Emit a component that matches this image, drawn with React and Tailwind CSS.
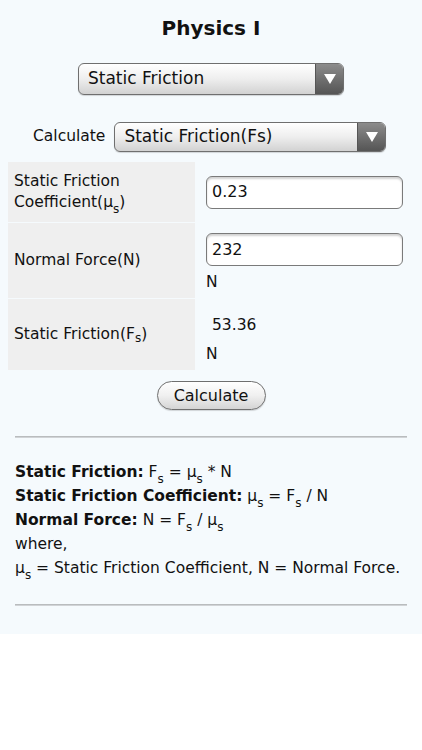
import React from "react";

const Sub = ({ children }) => (
  <sub className="text-[12px] align-[-3px] leading-none">{children}</sub>
);

const SelectBox = ({ label, className }) => (
  <div
    className={`flex items-stretch rounded-[6px] border border-[#6f6f6f] overflow-hidden bg-gradient-to-b from-[#ffffff] via-[#eeeeee] to-[#d2d2d2] shadow-[0_1px_1px_rgba(0,0,0,0.15)] ${className}`}
  >
    <div className="flex-1 flex items-center pl-[9px] text-[17px] text-[#111]">
      {label}
    </div>
    <div className="w-[28px] flex items-center justify-center bg-gradient-to-b from-[#8c8c8c] to-[#555555] border-l border-[#555]">
      <svg width="12" height="10" viewBox="0 0 12 10">
        <path d="M0 0 H12 L6 10 Z" fill="#fff" />
      </svg>
    </div>
  </div>
);

const Input = ({ value }) => (
  <div className="h-[33px] w-[197px] rounded-[6px] border border-[#7a7a7a] bg-white shadow-[inset_0_2px_2px_rgba(0,0,0,0.18)] flex items-center pl-[5px] text-[16px] text-[#111]">
    {value}
  </div>
);

export default function App() {
  return (
    <div className="bg-white min-h-[750px]">
      <div
        className="bg-[#f5fafd] pb-[28px] text-[#111]"
        style={{ fontFamily: '"DejaVu Sans", Verdana, sans-serif' }}
      >
        <h1 className="pt-[16px] text-center text-[20px] leading-[24px] font-bold">
          Physics I
        </h1>

        <div className="flex justify-center mt-[23px]">
          <SelectBox label="Static Friction" className="w-[266px] h-[32px]" />
        </div>

        <div className="flex items-center mt-[27px] pl-[33px] gap-[9px]">
          <span className="text-[15.5px]">Calculate</span>
          <SelectBox label="Static Friction(Fs)" className="w-[272px] h-[30px]" />
        </div>

        <div className="mt-[10px] ml-[8px] mr-[8px] flex flex-col gap-[1px] text-[15.5px]">
          <div className="flex h-[60px]">
            <div className="w-[187px] bg-[#efefef] flex items-center pl-[6px] leading-[21px]">
              <div>
                Static Friction
                <br />
                Coefficient(μ<Sub>s</Sub>)
              </div>
            </div>
            <div className="flex-1 flex items-center pl-[11px]">
              <Input value="0.23" />
            </div>
          </div>

          <div className="flex h-[75px]">
            <div className="w-[187px] bg-[#efefef] flex items-center pl-[6px]">
              Normal Force(N)
            </div>
            <div className="flex-1 flex flex-col justify-center pl-[11px] pt-[4px]">
              <Input value="232" />
              <div className="mt-[6px] leading-[20px]">N</div>
            </div>
          </div>

          <div className="flex h-[71px]">
            <div className="w-[187px] bg-[#efefef] flex items-center pl-[6px]">
              Static Friction(F<Sub>s</Sub>)
            </div>
            <div className="flex-1 flex flex-col justify-center pl-[11px] pt-[10px]">
              <div className="pl-[6px] leading-[20px]">53.36</div>
              <div className="mt-[9px] leading-[20px]">N</div>
            </div>
          </div>
        </div>

        <div className="flex justify-center mt-[11px]">
          <button className="w-[109px] h-[29px] rounded-full border border-[#6f6f6f] bg-gradient-to-b from-[#ffffff] via-[#f0f0f0] to-[#d4d4d4] text-[16px] text-[#111] shadow-[0_1px_1px_rgba(0,0,0,0.15)]">
            Calculate
          </button>
        </div>

        <hr className="mx-[15px] mt-[26px] border-0 h-[2px] bg-[#d0d3d6] border-t border-[#b9bcbe]" />

        <div className="px-[15px] pt-[22px] pb-[24px] text-[15.5px] leading-[24px]">
          <div>
            <b>Static Friction:</b> F<Sub>s</Sub> = μ<Sub>s</Sub> * N
          </div>
          <div>
            <b>Static Friction Coefficient:</b> μ<Sub>s</Sub> = F<Sub>s</Sub> / N
          </div>
          <div>
            <b>Normal Force:</b> N = F<Sub>s</Sub> / μ<Sub>s</Sub>
          </div>
          <div>where,</div>
          <div>
            μ<Sub>s</Sub> = Static Friction Coefficient, N = Normal Force.
          </div>
        </div>

        <hr className="mx-[15px] border-0 h-[2px] bg-[#d0d3d6] border-t border-[#b9bcbe]" />
      </div>
    </div>
  );
}
